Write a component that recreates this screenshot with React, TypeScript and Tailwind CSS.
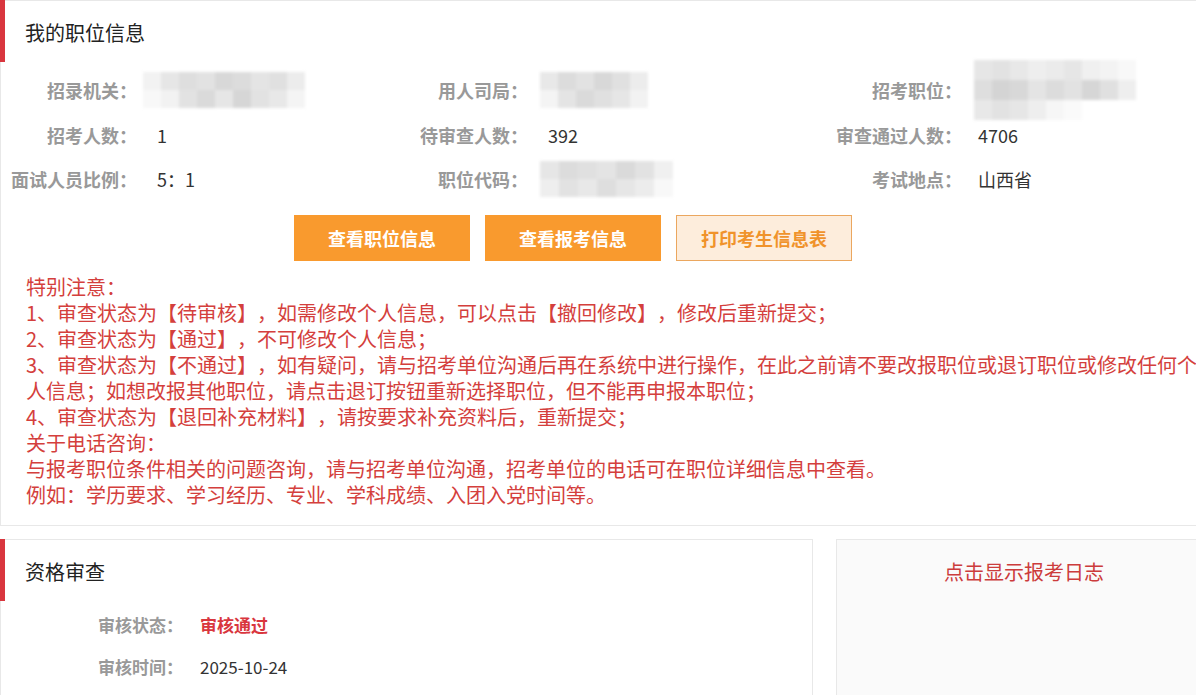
import React from "react"

const font = "font-['Noto_Sans_CJK_SC','Noto_Sans',sans-serif]"

function Mosaic({ cells, cols, size, className }: { cells: string[]; cols: string; size: string; className?: string }) {
  return (
    <div className={`grid ${cols} blur-[1.5px] ${className ?? ""}`}>
      {cells.map((c, i) => (
        <div key={i} className={`${size} ${c}`} />
      ))}
    </div>
  )
}

const mosaicA = [
  "bg-[#f2f2f2]", "bg-[#e6e6e6]", "bg-[#dedede]", "bg-[#e2e2e2]", "bg-[#d8d8d8]", "bg-[#dcdcdc]", "bg-[#e4e4e4]", "bg-[#e0e0e0]", "bg-[#ececec]",
  "bg-[#f8f8f8]", "bg-[#f2f2f2]", "bg-[#e2e2e2]", "bg-[#dadada]", "bg-[#e6e6e6]", "bg-[#d6d6d6]", "bg-[#e2e2e2]", "bg-[#e8e8e8]", "bg-[#f4f4f4]",
]
const mosaicB = [
  "bg-[#e8e8e8]", "bg-[#dcdcdc]", "bg-[#e2e2e2]", "bg-[#d8d8d8]", "bg-[#e0e0e0]", "bg-[#ececec]",
  "bg-[#f4f4f4]", "bg-[#e4e4e4]", "bg-[#dadada]", "bg-[#e0e0e0]", "bg-[#e6e6e6]", "bg-[#f2f2f2]",
]
const mosaicC = [
  "bg-[#e6e6e6]", "bg-[#e2e2e2]", "bg-[#e8e8e8]", "bg-[#eeeeee]", "bg-[#ebebeb]", "bg-[#e6e6e6]", "bg-[#f0f0f0]", "bg-[#f3f3f3]", "bg-[#f8f8f8]",
  "bg-[#dedede]", "bg-[#d4d4d4]", "bg-[#d8d8d8]", "bg-[#e4e4e4]", "bg-[#dcdcdc]", "bg-[#e2e2e2]", "bg-[#d6d6d6]", "bg-[#e0e0e0]", "bg-[#eeeeee]",
  "bg-[#e8e8e8]", "bg-[#e2e2e2]", "bg-[#e6e6e6]", "bg-[#eeeeee]", "bg-[#f6f6f6]", "bg-[#fafafa]", "bg-white", "bg-white", "bg-white",
]
const mosaicD = [
  "bg-[#e6e6e6]", "bg-[#dcdcdc]", "bg-[#e0e0e0]", "bg-[#e4e4e4]", "bg-[#dadada]", "bg-[#e2e2e2]", "bg-[#f0f0f0]",
  "bg-[#eeeeee]", "bg-[#e2e2e2]", "bg-[#e8e8e8]", "bg-[#dedede]", "bg-[#e6e6e6]", "bg-[#ececec]", "bg-[#f8f8f8]",
]

const notes = [
  "特别注意：",
  "1、审查状态为【待审核】，如需修改个人信息，可以点击【撤回修改】，修改后重新提交；",
  "2、审查状态为【通过】，不可修改个人信息；",
  "3、审查状态为【不通过】，如有疑问，请与招考单位沟通后再在系统中进行操作，在此之前请不要改报职位或退订职位或修改任何个人信息；如想改报其他职位，请点击退订按钮重新选择职位，但不能再申报本职位；",
  "4、审查状态为【退回补充材料】，请按要求补充资料后，重新提交；",
  "关于电话咨询：",
  "与报考职位条件相关的问题咨询，请与招考单位沟通，招考单位的电话可在职位详细信息中查看。",
  "例如：学历要求、学习经历、专业、学科成绩、入团入党时间等。",
]

function Label({ children }: { children: React.ReactNode }) {
  return <div className="text-right text-[18px] font-bold text-[#999999] whitespace-nowrap">{children}</div>
}

function Value({ children, className }: { children?: React.ReactNode; className?: string }) {
  return <div className={`text-[18px] text-[#333333] whitespace-nowrap ${className ?? "pl-5"}`}>{children}</div>
}

function CardHeader({ title }: { title: string }) {
  return (
    <div className="-mt-px -ml-px flex h-[62px] items-center border-l-[5px] border-[#d9363e] pt-1 pl-5 text-[20px] text-[#222222]">
      {title}
    </div>
  )
}

export default function App() {
  return (
    <div className={`h-[695px] w-[1196px] overflow-hidden bg-white ${font} [text-spacing-trim:space-all]`}>
      <div className="w-[1212px]">
        {/* 我的职位信息 */}
        <div className="border border-[#e8e8e8] pb-[17px]">
          <CardHeader title="我的职位信息" />

          <div className="mt-[6px] grid grid-cols-[136px_255px_136px_298px_136px_1fr] grid-rows-[44px_46px_42px] items-center">
            <Label>招录机关：</Label>
            <Value>
              <Mosaic cells={mosaicA} cols="grid-cols-[repeat(9,18px)]" size="h-[18px]" className="-ml-[14px] w-fit" />
            </Value>
            <Label>用人司局：</Label>
            <Value>
              <Mosaic cells={mosaicB} cols="grid-cols-[repeat(6,18px)]" size="h-[18px]" className="-ml-2 w-fit" />
            </Value>
            <Label>招考职位：</Label>
            <Value className="pl-4">
              <Mosaic cells={mosaicC} cols="grid-cols-[repeat(9,18px)]" size="h-[20px]" className="-my-[10px] -ml-1 w-fit" />
            </Value>

            <Label>招考人数：</Label>
            <Value>1</Value>
            <Label>待审查人数：</Label>
            <Value>392</Value>
            <Label>审查通过人数：</Label>
            <Value className="pl-4">4706</Value>

            <Label>面试人员比例：</Label>
            <Value>5：1</Value>
            <Label>职位代码：</Label>
            <Value>
              <Mosaic cells={mosaicD} cols="grid-cols-[repeat(7,19px)]" size="h-[18px]" className="-ml-2 w-fit" />
            </Value>
            <Label>考试地点：</Label>
            <Value className="pl-4">山西省</Value>
          </div>

          <div className="mt-[15px] ml-[293px] flex gap-[15px]">
            <button className="h-[46px] w-[176px] bg-[#f99a2e] text-[18px] font-bold text-white">查看职位信息</button>
            <button className="h-[46px] w-[176px] bg-[#f99a2e] text-[18px] font-bold text-white">查看报考信息</button>
            <button className="h-[46px] w-[176px] border border-[#eba75f] bg-[#fdeddc] text-[18px] font-bold text-[#f0932b]">
              打印考生信息表
            </button>
          </div>

          <div className="mt-[13px] w-[1200px] pl-[25px] text-[20px] leading-[26px] text-[#d43f3d]">
            {notes.map((n) => (
              <p key={n}>{n}</p>
            ))}
          </div>
        </div>

        {/* 下方两栏 */}
        <div className="mt-[13px] flex gap-[23px]">
          <div className="h-[200px] w-[813px] border border-[#e8e8e8]">
            <CardHeader title="资格审查" />
            <div className="mt-[3px] grid grid-cols-[182px_1fr] grid-rows-[42px_42px] items-center text-[17px]">
              <div className="text-right font-bold text-[#999999]">审核状态：</div>
              <div className="pl-[17px] font-bold text-[#d9363e]">审核通过</div>
              <div className="text-right font-bold text-[#999999]">审核时间：</div>
              <div className="pl-[17px] text-[#333333]">2025-10-24</div>
            </div>
          </div>

          <div className="h-[200px] flex-1 border border-[#e8e8e8] bg-[#fafafa] pt-[18px] text-center">
            <span className="text-[20px] leading-[28px] text-[#cc3c3c]">点击显示报考日志</span>
          </div>
        </div>
      </div>
    </div>
  )
}
